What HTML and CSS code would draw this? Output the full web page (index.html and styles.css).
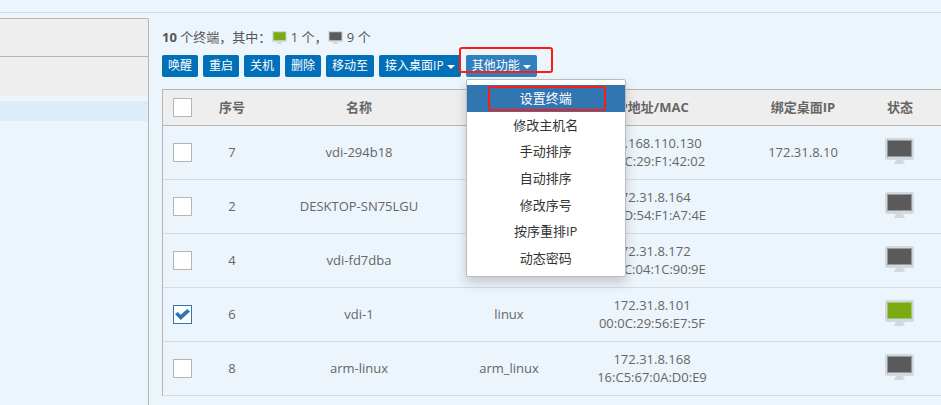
FILE: index.html
```html
<!DOCTYPE html>
<html lang="zh-CN">
<head>
<meta charset="utf-8">
<title>终端</title>
<link rel="stylesheet" href="styles.css">
</head>
<body>
<svg class="defs" aria-hidden="true">
  <symbol id="monitor" viewBox="0 0 29 26">
    <path class="frame" d="M2 0H27Q29 0 29 2V20Q29 22 27 22H18Q19 24 20 26H9Q10 24 11 22H2Q0 22 0 20V2Q0 0 2 0Z"/>
    <rect class="bezel" x="2" y="2" width="25" height="17"/>
    <rect class="screen" x="3" y="3" width="23" height="15"/>
  </symbol>
</svg>
<header class="topbar"></header>
<div class="layout">
  <aside class="sidebar">
    <div class="side-head"></div>
    <div class="side-tools"></div>
    <div class="side-active"></div>
  </aside>
  <main class="main">
    <p class="summary"><b>10</b> 个终端，其中：<svg class="monitor small on"><use href="#monitor"/></svg> 1 个，<svg class="monitor small"><use href="#monitor"/></svg> 9 个</p>
    <div class="toolbar">
      <button class="btn">唤醒</button>
      <button class="btn">重启</button>
      <button class="btn">关机</button>
      <button class="btn">删除</button>
      <button class="btn">移动至</button>
      <button class="btn">接入桌面IP<span class="caret"></span></button>
      <div class="dropdown">
        <button class="btn open">其他功能<span class="caret"></span></button>
        <span class="mark mark-button"></span>
        <div class="menu">
          <button class="item active">设置终端<span class="mark mark-item"></span></button>
          <button class="item">修改主机名</button>
          <button class="item">手动排序</button>
          <button class="item">自动排序</button>
          <button class="item">修改序号</button>
          <button class="item">按序重排IP</button>
          <button class="item">动态密码</button>
        </div>
      </div>
    </div>
    <table class="grid">
      <colgroup><col class="c-check"><col class="c-no"><col><col class="c-group"><col class="c-ip"><col class="c-bind"><col class="c-state"></colgroup>
      <thead>
        <tr><th><input type="checkbox" aria-label="全选"></th><th>序号</th><th>名称</th><th></th><th>IP地址/MAC</th><th>绑定桌面IP</th><th>状态</th></tr>
      </thead>
      <tbody>
        <tr><td><input type="checkbox" aria-label="vdi-294b18"></td><td>7</td><td>vdi-294b18</td><td></td><td>192.168.110.130<br>00:0C:29:F1:42:02</td><td>172.31.8.10</td><td><svg class="monitor"><use href="#monitor"/></svg></td></tr>
        <tr><td><input type="checkbox" aria-label="DESKTOP-SN75LGU"></td><td>2</td><td>DESKTOP-SN75LGU</td><td></td><td>172.31.8.164<br>00:0D:54:F1:A7:4E</td><td></td><td><svg class="monitor"><use href="#monitor"/></svg></td></tr>
        <tr><td><input type="checkbox" aria-label="vdi-fd7dba"></td><td>4</td><td>vdi-fd7dba</td><td></td><td>172.31.8.172<br>00:0C:04:1C:90:9E</td><td></td><td><svg class="monitor"><use href="#monitor"/></svg></td></tr>
        <tr><td><input type="checkbox" aria-label="vdi-1" checked></td><td>6</td><td>vdi-1</td><td>linux</td><td>172.31.8.101<br>00:0C:29:56:E7:5F</td><td></td><td><svg class="monitor on"><use href="#monitor"/></svg></td></tr>
        <tr><td><input type="checkbox" aria-label="arm-linux"></td><td>8</td><td>arm-linux</td><td>arm_linux</td><td>172.31.8.168<br>16:C5:67:0A:D0:E9</td><td></td><td><svg class="monitor"><use href="#monitor"/></svg></td></tr>
      </tbody>
    </table>
  </main>
</div>
</body>
</html>
```

FILE: styles.css
```css
* { box-sizing: border-box; }

body {
  margin: 0;
  min-height: 100vh;
  display: flex;
  flex-direction: column;
  background: #edf5fc;
  color: #666;
  font: 13px/18px "Open Sans", "Noto Sans CJK SC", sans-serif;
}

button { font: inherit; border: 0; cursor: pointer; }

.defs { position: absolute; width: 0; height: 0; }

.topbar { height: 13px; border-bottom: 1px solid #d9dcdf; }

.layout { flex: 1; display: flex; gap: 13px; padding-top: 5px; }

/* Sidebar */
.sidebar {
  flex: 0 0 149px;
  border: solid #b5b5b5;
  border-width: 1px 1px 0 0;
  border-top-right-radius: 2px;
}
.side-head { height: 38px; background: #eee; border-bottom: 1px solid #b5b5b5; }
.side-tools { height: 39px; background: #eee; }
.side-active { height: 20px; margin-top: 5px; background: #dcecf9; }

/* Content */
.main { flex: 1; min-width: 0; padding-top: 8px; }

.summary { margin: 0; height: 22px; line-height: 22px; color: #555; }

.monitor { width: 29px; height: 26px; display: block; margin: 0 auto; color: #5a5a5a; }
.monitor.on { color: #7aab12; }
.monitor.small { display: inline-block; width: 15px; height: 13px; margin: 0 0 0 1px; vertical-align: -2px; }
.frame { fill: #d1d9e0; }
.bezel { fill: currentColor; opacity: .5; }
.screen { fill: currentColor; }

.toolbar { display: flex; gap: 5px; margin: 7px 0 12px; }
.btn {
  display: flex;
  align-items: center;
  height: 22px;
  padding: 0 6px;
  border-radius: 2px;
  background: #0070b8;
  color: #fff;
  font-size: 12px;
}
.btn.open { background: #3080c0; }
.caret { margin: 2px 0 0 3px; border: solid transparent; border-width: 4px 4px 0; border-top-color: #fff; }

.dropdown { position: relative; }
.menu {
  position: absolute;
  z-index: 2;
  top: 24px;
  left: 0;
  width: 160px;
  height: 198px;
  padding: 5px 0;
  display: grid;
  grid-auto-rows: 1fr;
  background: #fff;
  border: 1px solid #bbb;
  border-radius: 2px;
  box-shadow: 0 6px 12px rgba(0, 0, 0, .18);
}
.item { position: relative; padding: 0; background: none; color: #333; text-align: center; }
.item.active { background: #3276b1; color: #fff; }

.mark { position: absolute; border: 2px solid #ff1a12; border-radius: 3px; pointer-events: none; }
.mark-button { z-index: 1; left: -7px; top: -8px; width: 94px; height: 26px; }
.mark-item { inset: 1px 19px 1px 21px; }

/* Table */
.grid {
  width: 100%;
  table-layout: fixed;
  border-collapse: separate;
  border-spacing: 0;
  border: solid #b5b5b5;
  border-width: 1px 0 0 1px;
  text-align: center;
}
.c-check { width: 39px; }
.c-no { width: 60px; }
.c-group { width: 106px; }
.c-ip { width: 180px; }
.c-bind { width: 122px; }
.c-state { width: 77px; }
.grid th, .grid td { padding: 0 0 2px; border-bottom: 1px solid #d9dcdf; }
.grid th { height: 36px; background: #eee; border-color: #b5b5b5; font-weight: 700; }
.grid td { height: 54px; }
.grid th:first-child, .grid td:first-child { padding: 0; }
.grid th:last-child { padding-right: 5px; }
.grid td:last-child { padding: 0 6px 4px 0; }

.grid input {
  appearance: none;
  display: block;
  width: 19px;
  height: 19px;
  margin: 0 auto;
  background: #fff;
  border: 1px solid #b5b5b5;
}
.grid input:checked { border-color: #3276b1; display: grid; place-items: center; }
.grid input:checked::before {
  content: "";
  width: 15px;
  height: 13px;
  background: #3276b1;
  clip-path: polygon(0 46%, 18% 31%, 38% 52%, 82% 8%, 100% 27%, 38% 92%);
}
```
